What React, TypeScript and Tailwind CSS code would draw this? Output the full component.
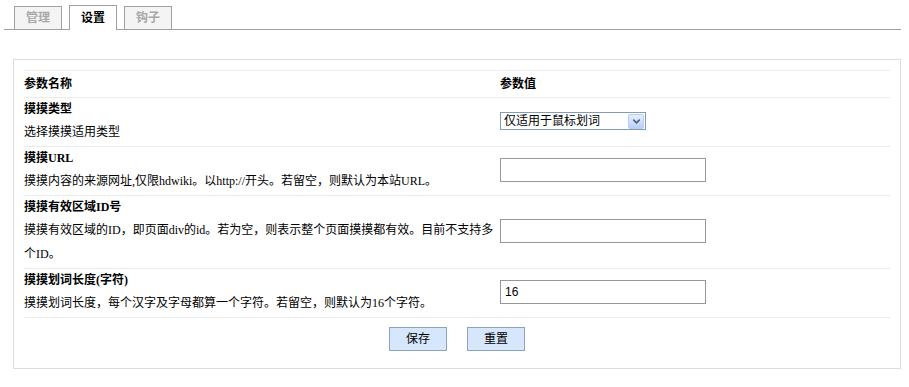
import { ChevronDown } from 'lucide-react';

const font = { fontFamily: '"Liberation Serif", "Noto Sans CJK SC", serif' };

interface Row {
    title: string;
    desc: string[];
    field: 'select' | 'input';
    value?: string;
}

const rows: Row[] = [
    { title: '摸摸类型', desc: ['选择摸摸适用类型'], field: 'select' },
    { title: '摸摸URL', desc: ['摸摸内容的来源网址,仅限hdwiki。以http://开头。若留空，则默认为本站URL。'], field: 'input' },
    {
        title: '摸摸有效区域ID号',
        desc: ['摸摸有效区域的ID，即页面div的id。若为空，则表示整个页面摸摸都有效。目前不支持多', '个ID。'],
        field: 'input',
    },
    { title: '摸摸划词长度(字符)', desc: ['摸摸划词长度，每个汉字及字母都算一个字符。若留空，则默认为16个字符。'], field: 'input', value: '16' },
];

function Tab({ label, active }: { label: string; active?: boolean }) {
    return (
        <div
            className={`w-[48px] flex items-center justify-center border border-[#a0a0a0] border-b-0 font-bold text-[12px] ${
                active ? 'h-[25px] bg-white text-black -mb-px' : 'h-[23px] bg-[#f4f4f4] text-[#a8a8a8]'
            }`}
        >
            {label}
        </div>
    );
}

function FakeSelect() {
    return (
        <div className="w-[146px] h-[18px] border border-[#7f9db9] bg-white flex items-center justify-between pl-[3px] pr-px">
            <span className="text-[12px] text-black leading-none">仅适用于鼠标划词</span>
            <span className="w-[16px] h-[15px] rounded-[2px] border border-[#b9cdf0] bg-gradient-to-b from-[#e6eefc] to-[#bccff5] flex items-center justify-center">
                <ChevronDown size={11} strokeWidth={3.5} className="text-[#4d6185]" />
            </span>
        </div>
    );
}

export default function App() {
    return (
        <div className="bg-white w-[909px] h-[387px] pt-[5px]" style={font}>
            <div className="ml-[4px] w-[897px] h-[25px] border-b border-[#a0a0a0] flex items-end gap-[7px] pl-[10px]">
                <Tab label="管理" />
                <Tab label="设置" active />
                <Tab label="钩子" />
            </div>

            <div className="ml-[13px] mt-[29px] w-[888px] h-[310px] border border-[#dcdcdc] px-[10px] pt-[10px]">
                <div className="border-t border-[#ececec] text-[12px] text-black">
                    <div className="flex h-[27px] items-center border-b border-[#ececec] font-bold">
                        <div className="w-[476px]">参数名称</div>
                        <div>参数值</div>
                    </div>

                    {rows.map((row) => (
                        <div key={row.title} className="flex items-center border-b border-[#ececec] pb-[2px]">
                            <div className="w-[476px]">
                                <div className="h-[22px] leading-[22px] font-bold">{row.title}</div>
                                {row.desc.map((line) => (
                                    <div key={line} className="h-[24px] leading-[24px] whitespace-nowrap">
                                        {line}
                                    </div>
                                ))}
                            </div>
                            <div>
                                {row.field === 'select' ? (
                                    <FakeSelect />
                                ) : (
                                    <input
                                        defaultValue={row.value}
                                        className="w-[206px] h-[24px] border border-[#8f999f] px-[4px] text-[12px] outline-none"
                                        style={{ fontFamily: '"Liberation Sans", "Noto Sans CJK SC", sans-serif' }}
                                    />
                                )}
                            </div>
                        </div>
                    ))}

                    <div className="flex justify-center gap-[20px] pt-[9px]">
                        <button className="w-[58px] h-[24px] border border-[#8ea3bd] bg-[#d6e7fc] text-[12px] text-black">保存</button>
                        <button className="w-[58px] h-[24px] border border-[#8ea3bd] bg-[#d6e7fc] text-[12px] text-black">重置</button>
                    </div>
                </div>
            </div>
        </div>
    );
}
